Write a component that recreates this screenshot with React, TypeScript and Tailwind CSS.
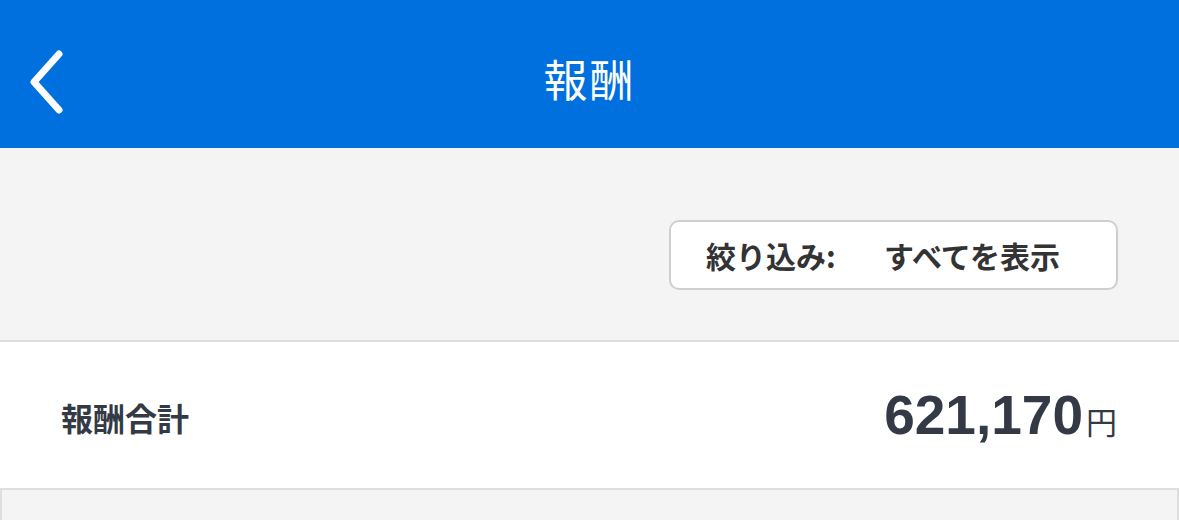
import React from "react";

const jp = "font-['Noto_Sans_CJK_JP','Noto_Sans',sans-serif]";

function BackIcon() {
  return (
    <svg width="44" height="66" viewBox="0 0 44 66" fill="none">
      <path d="M37 5 L12 33 L37 61" stroke="#fff" strokeWidth="7" strokeLinecap="round" strokeLinejoin="round" />
    </svg>
  );
}

export default function App() {
  return (
    <div className={`min-h-screen w-full bg-[#f4f4f4] ${jp}`}>
      <header className="relative flex h-[148px] items-center justify-center bg-[#0070de]">
        <button className="absolute left-[22px] top-[49px]">
          <BackIcon />
        </button>
        <h1 className="mt-[8px] text-[44px] font-normal tracking-[2px] text-white">報酬</h1>
      </header>

      <section className="flex justify-end px-[61px] pb-[50px] pt-[72px]">
        <div className="flex h-[70px] w-[449px] items-center rounded-[10px] border-2 border-[#cfcfcf] bg-white pl-[35px] text-[30px] font-bold text-[#333]">
          <span className="w-[178px]">絞り込み:</span>
          <span>すべてを表示</span>
        </div>
      </section>

      <section className="flex h-[150px] items-center justify-between border-y-2 border-[#dedede] bg-white pl-[61px] pr-[62px] text-[#333a45]">
        <span className="mt-[4px] text-[32px] font-bold">報酬合計</span>
        <span className="flex items-baseline">
          <span className="font-['Liberation_Sans',Arial,sans-serif] text-[55px] font-bold leading-none">621,170</span>
          <span className="ml-[3px] text-[31px] font-normal leading-none">円</span>
        </span>
      </section>

      <div className="h-[40px] border-x-2 border-[#dedede] bg-[#f4f4f4]" />
    </div>
  );
}
